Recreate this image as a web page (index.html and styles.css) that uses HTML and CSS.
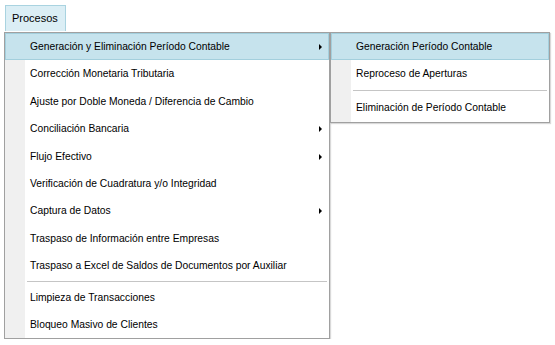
FILE: index.html
```html
<!DOCTYPE html>
<html lang="es">
<head>
    <meta charset="UTF-8">
    <title>Procesos</title>
    <link rel="stylesheet" href="styles.css">
</head>
<body>

<div class="menubar">
    <div class="menubar_item">Procesos</div>
</div>

<div class="menu main_menu">
    <div class="item active has_sub">Generación y Eliminación Período Contable<span class="arrow"></span></div>
    <div class="item">Corrección Monetaria Tributaria</div>
    <div class="item">Ajuste por Doble Moneda / Diferencia de Cambio</div>
    <div class="item has_sub">Conciliación Bancaria<span class="arrow"></span></div>
    <div class="item has_sub">Flujo Efectivo<span class="arrow"></span></div>
    <div class="item">Verificación de Cuadratura y/o Integridad</div>
    <div class="item has_sub">Captura de Datos<span class="arrow"></span></div>
    <div class="item">Traspaso de Información entre Empresas</div>
    <div class="item">Traspaso a Excel de Saldos de Documentos por Auxiliar</div>
    <div class="sep"></div>
    <div class="item">Limpieza de Transacciones</div>
    <div class="item">Bloqueo Masivo de Clientes</div>

    <!-- submenu of the first item -->
    <div class="menu sub_menu">
        <div class="item active">Generación Período Contable</div>
        <div class="item">Reproceso de Aperturas</div>
        <div class="sep"></div>
        <div class="item">Eliminación de Período Contable</div>
    </div>
</div>

</body>
</html>
```

FILE: styles.css
```css
body {
    margin: 0;
    padding: 5px 0 0 4px;
    background-color: #ffffff;
    font-family: "Liberation Sans", Arial, sans-serif;
    font-size: 10.3px;
    color: #000000;
}

.menubar {
    display: flex;
    padding-left: 1px;
}

.menubar_item {
    height: 25px;
    line-height: 25px;
    padding: 0 7px 0 6px;
    font-size: 11px;
    background-color: #dbeef5;
    border: 1px solid #a9d3e0;
    border-bottom: none;
}

.menu {
    position: relative;
    display: flex;
    flex-direction: column;
    background-color: #ffffff;
    background-image: linear-gradient(to right, #f0f0f0 0, #f0f0f0 20px, #ffffff 20px);
    border: 1px solid #a0a0a0;
    box-shadow: 1px 1px 1px rgba(0, 0, 0, 0.15);
}

.main_menu {
    width: 324px;
    margin-top: 1px;
}

.sub_menu {
    position: absolute;
    left: 325px;
    top: -1px;
    width: 218px;
}

.item {
    position: relative;
    height: 27.4px;
    line-height: 27.4px;
    padding-left: 25px;
    white-space: nowrap;
}

.sub_menu .item {
    padding-left: 25px;
    height: 28px;
    line-height: 28px;
}

.sub_menu .item.active {
    height: 27px;
    line-height: 27px;
}

.item.active {
    background-color: #c6e3ed;
    box-shadow: inset 0 0 0 1px #a3cfdd;
}

.arrow {
    position: absolute;
    right: 7px;
    top: 11px;
    width: 0;
    height: 0;
    border-top: 3px solid transparent;
    border-bottom: 3px solid transparent;
    border-left: 3px solid #000000;
}

.sep {
    height: 1px;
    margin: 1px 2px 1px 22px;
    background-color: #c5c5c5;
    border-bottom: 1px solid #ffffff;
}

.sub_menu .sep {
    margin: 2px 2px 2px 22px;
}
```
